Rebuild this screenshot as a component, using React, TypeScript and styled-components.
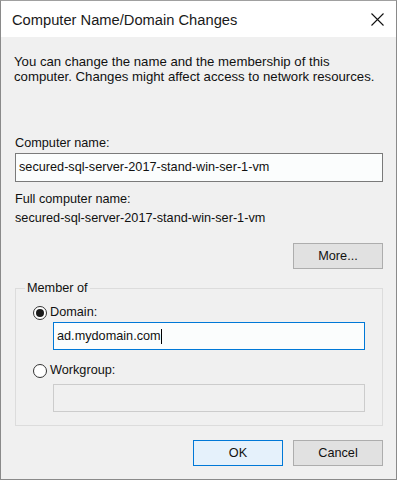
import styled, { createGlobalStyle } from "styled-components";

const GlobalStyle = createGlobalStyle`
    html, body {
        margin: 0;
        padding: 0;
        background: #f0f0f0;
    }
    * {
        box-sizing: border-box;
    }
`;

export default function App() {
    return (
        <>
            <GlobalStyle />
            <Window>
                <TitleBar>
                    <Title>Computer Name/Domain Changes</Title>
                    <CloseButton>
                        <svg width="13" height="13" viewBox="0 0 13 13">
                            <path d="M0.5 0.5 L12.5 12.5 M12.5 0.5 L0.5 12.5" stroke="#111" strokeWidth="1.1" fill="none" />
                        </svg>
                    </CloseButton>
                </TitleBar>
                <Body>
                    <Description>
                        You can change the name and the membership of this
                        <br />
                        computer. Changes might affect access to network resources.
                    </Description>

                    <Label $top={52}>Computer name:</Label>
                    <Field $height={29} $top={2}>secured-sql-server-2017-stand-win-ser-1-vm</Field>

                    <Label $top={10}>Full computer name:</Label>
                    <Label $top={4}>secured-sql-server-2017-stand-win-ser-1-vm</Label>

                    <MoreRow>
                        <Button>More...</Button>
                    </MoreRow>

                    <Group>
                        <Legend>Member of</Legend>
                        <RadioRow $top={9}>
                            <Radio $checked />
                            <span>Domain:</span>
                        </RadioRow>
                        <Field $height={28} $top={2} $focused $indent>
                            ad.mydomain.com<Caret />
                        </Field>
                        <RadioRow $top={13}>
                            <Radio />
                            <span>Workgroup:</span>
                        </RadioRow>
                        <Field $height={28} $top={6} $disabled $indent />
                    </Group>

                    <Footer>
                        <Button $primary>OK</Button>
                        <Button>Cancel</Button>
                    </Footer>
                </Body>
            </Window>
        </>
    );
}

const Window = styled.div`
    width: 397px;
    height: 480px;
    border: 1px solid #8a8a8a;
    border-top-color: #a0a0a0;
    background: #f0f0f0;
    display: flex;
    flex-direction: column;
    font-family: "Liberation Sans", Arial, sans-serif;
    font-size: 12.7px;
    color: #111;
`;

const TitleBar = styled.div`
    height: 36px;
    background: #ffffff;
    display: flex;
    align-items: center;
    justify-content: space-between;
    padding: 0 12px 0 11px;
`;

const Title = styled.div`
    font-size: 14.7px;
    color: #1a1a1a;
    margin-top: 2px;
`;

const CloseButton = styled.div`
    width: 13px;
    height: 13px;
    display: flex;
    margin-top: 1px;
`;

const Body = styled.div`
    flex: 1;
    display: flex;
    flex-direction: column;
    padding: 0 13px 0 14px;
`;

const Description = styled.div`
    margin: 17px 0 0 -1px;
    line-height: 15px;
    font-size: 13.2px;
`;

const Label = styled.div<{ $top: number }>`
    margin-top: ${(p) => p.$top}px;
    line-height: 15px;
`;

const Field = styled.div<{ $height: number; $top: number; $focused?: boolean; $disabled?: boolean; $indent?: boolean }>`
    height: ${(p) => p.$height}px;
    margin-top: ${(p) => p.$top}px;
    margin-left: ${(p) => (p.$indent ? "37px" : "0")};
    margin-right: ${(p) => (p.$indent ? "17px" : "0")};
    border: 1px solid ${(p) => (p.$focused ? "#0078d7" : p.$disabled ? "#cccccc" : "#7a7a7a")};
    background: ${(p) => (p.$disabled ? "#f0f0f0" : "#fbfdfd")};
    display: flex;
    align-items: center;
    padding-left: 3px;
    line-height: 15px;
`;

const Caret = styled.span`
    display: inline-block;
    width: 1px;
    height: 15px;
    background: #000;
`;

const MoreRow = styled.div`
    display: flex;
    justify-content: flex-end;
    margin-top: 17px;
`;

const Button = styled.div<{ $primary?: boolean }>`
    width: 90px;
    height: 26px;
    display: flex;
    align-items: center;
    justify-content: center;
    background: ${(p) => (p.$primary ? "#e5f1fb" : "#e1e1e1")};
    border: 1px solid ${(p) => (p.$primary ? "#0078d7" : "#adadad")};
    color: #111;
`;

const Group = styled.fieldset`
    margin: 12px 0 0 0;
    padding: 0 0 13px 0;
    border: 1px solid #dcdcdc;
    min-width: 0;
`;

const Legend = styled.legend`
    margin-left: 9px;
    padding: 0 2px;
    line-height: 15px;
`;

const RadioRow = styled.div<{ $top: number }>`
    margin-top: ${(p) => p.$top}px;
    margin-left: 17px;
    display: flex;
    align-items: center;
    gap: 3px;
    line-height: 15px;
`;

const Radio = styled.span<{ $checked?: boolean }>`
    width: 14px;
    height: 14px;
    border-radius: 50%;
    border: 1.3px solid #333;
    background: #fff;
    display: flex;
    align-items: center;
    justify-content: center;

    &::after {
        content: "";
        display: ${(p) => (p.$checked ? "block" : "none")};
        width: 8px;
        height: 8px;
        border-radius: 50%;
        background: #1a1a1a;
    }
`;

const Footer = styled.div`
    display: flex;
    justify-content: flex-end;
    gap: 10px;
    margin-top: 14px;
`;
